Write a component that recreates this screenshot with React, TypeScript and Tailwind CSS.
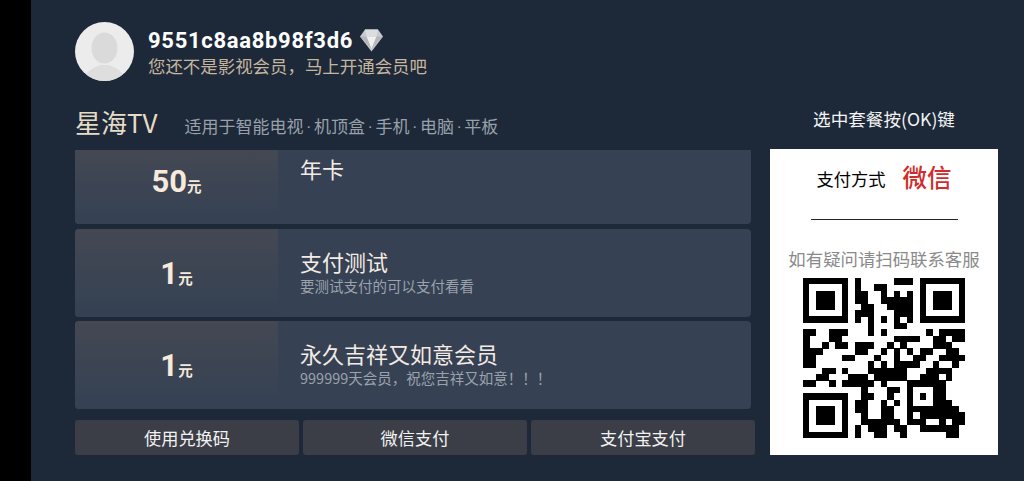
import React from 'react';

const cjk = 'font-["Noto_Sans_CJK_SC",sans-serif]';

// dark modules per row, finder and alignment rings are added below
const qrRows: number[][] = [
  [8, 14, 15, 16],
  [8, 11, 12],
  [8, 9, 12, 14, 16],
  [8, 9, 12, 13, 14, 15, 16],
  [9, 10, 13, 14, 15, 16],
  [8, 9, 10, 14, 15, 16],
  [8, 10, 12, 14, 16],
  [10, 14, 15],
  [0, 1, 4, 5, 6, 10, 12, 19, 21, 22, 23, 24],
  [0, 4, 5, 14, 15, 16, 17, 20, 21, 23, 24],
  [0, 3, 5, 6, 8, 9, 10, 13, 15, 20, 21, 22],
  [0, 1, 2, 8, 9, 12, 14, 16, 18, 19, 22, 23],
  [0, 1, 6, 7, 11, 14, 17, 18, 21, 22, 23, 24],
  [0, 1, 10, 12, 14, 15, 16, 17, 20, 23],
  [3, 4, 6, 10, 11, 12, 13, 14, 15, 19, 20, 21, 22],
  [2, 3, 7, 8, 9, 11, 12, 13, 14, 15, 18, 19, 20, 22],
  [0, 1, 4, 6, 7, 8, 9, 10, 12, 21],
  [9, 13, 14, 21],
  [9, 10, 13, 21],
  [8, 9, 12, 14, 21, 22],
  [8, 9, 12, 13, 21, 22, 23],
  [9, 12, 13, 16, 18, 19, 20, 21, 22, 23, 24],
  [9, 10, 11, 12, 13, 14, 16, 17, 18, 21, 23, 24],
  [8, 10, 11, 12, 14, 15, 18, 19, 20, 21, 22, 23],
  [8, 11, 12, 15, 22, 23],
];

function Finder({ x, y }: { x: number; y: number }) {
  return (
    <g>
      <path fillRule="evenodd" d={`M${x} ${y}h7v7h-7zM${x + 1} ${y + 1}v5h5v-5z`} fill="#000" />
      <rect x={x + 2} y={y + 2} width="3" height="3" fill="#000" />
    </g>
  );
}

function QrCode() {
  return (
    <svg
      width="162"
      height="160"
      viewBox="0 0 25 25"
      preserveAspectRatio="none"
      shapeRendering="crispEdges"
      className="block"
    >
      <Finder x={0} y={0} />
      <Finder x={18} y={0} />
      <Finder x={0} y={18} />
      <path fillRule="evenodd" d="M16 16h5v5h-5zM17 17v3h3v-3z" fill="#000" />
      <rect x="18" y="18" width="1" height="1" fill="#000" />
      {qrRows.map((cols, r) =>
        cols.map((c) => <rect key={`${r}-${c}`} x={c} y={r} width="1.02" height="1.02" fill="#000" />)
      )}
    </svg>
  );
}

function Diamond() {
  return (
    <svg width="23" height="23" viewBox="0 0 23 23">
      <path d="M5 0.5h13l5 7L11.5 22.5 0 7.5z" fill="#c9cacd" />
      <path d="M6.5 7.5h10L11.5 20z" fill="#f0f0f1" />
      <path d="M5 0.5h13l-1.5 7h-10z" fill="#dcdde0" />
      <path d="M0 7.5l6.5 0 5 12.5zM23 7.5h-6.5l-5 12.5z" fill="#b5b7bb" />
    </svg>
  );
}

function Avatar() {
  return (
    <div className="w-[59px] h-[59px] rounded-full bg-[#ececec] overflow-hidden shrink-0">
      <svg width="59" height="59" viewBox="0 0 59 59">
        <ellipse cx="29.5" cy="26" rx="13" ry="15.5" fill="#dadada" />
        <path d="M9 59c1-10 9-13 16-16h9c7 3 15 6 16 16z" fill="#dedede" />
      </svg>
    </div>
  );
}

function Dot() {
  return <span className="font-['Roboto',sans-serif] px-[3px]">·</span>;
}

interface PlanProps {
  price: string;
  title: string;
  desc?: string;
  clipped?: boolean;
}

function Plan({ price, title, desc, clipped }: PlanProps) {
  return (
    <div
      className={`flex w-[676px] bg-[#364153] rounded-[4px] overflow-hidden ${
        clipped ? 'h-[74px] rounded-t-none mb-[1px]' : 'h-[88px]'
      }`}
    >
      <div className="w-[203px] flex items-center justify-center bg-gradient-to-b from-[#444853] to-[#344153] text-[#f7e9dc]">
        <span className={`${clipped ? 'mb-[12px]' : ''} flex items-baseline`}>
          <span className="font-['Roboto',sans-serif] font-bold text-[31px] leading-none">{price}</span>
          <span className="text-[14.5px] font-bold leading-none">元</span>
        </span>
      </div>
      <div className={`flex flex-col pl-[22px] ${clipped ? 'pt-[3px]' : 'justify-center'}`}>
        <div className="text-[22px] leading-[30px] text-[#f3ebe4]">{title}</div>
        {desc && <div className="text-[14.5px] leading-[18px] text-[#9aa2ad] mt-[1px] mb-[6px]">{desc}</div>}
      </div>
    </div>
  );
}

function PayButton({ label }: { label: string }) {
  return (
    <div className="w-[224px] h-[35px] rounded-[3px] bg-[#3b3e46] flex items-center justify-center text-[17.2px] text-[#f2f2f2]">
      {label}
    </div>
  );
}

export default function App() {
  return (
    <div className={`flex w-[1024px] h-[481px] overflow-hidden bg-black ${cjk}`}>
      <div className="w-[31px] shrink-0" />
      <div className="flex-1 bg-[#1d2939] pl-[44px] pt-[22px]">
        <div className="flex items-center gap-[14px] h-[59px]">
          <Avatar />
          <div className="flex flex-col">
            <div className="flex items-center gap-[7px] h-[28px] pt-[2px]">
              <span className="font-['Roboto',sans-serif] font-bold text-[22px] tracking-[0.7px] text-white">
                9551c8aa8b98f3d6
              </span>
              <Diamond />
            </div>
            <div className="text-[17.45px] leading-[24px] text-[#c6b69f]">您还不是影视会员，马上开通会员吧</div>
          </div>
        </div>
        <div className="flex mt-[22px] gap-[15px]">
          <div className="w-[680px] shrink-0">
            <div className="flex items-start h-[47px] pt-[2px]">
              <span className="text-[26px] leading-[34px] text-[#e6dcc6]">星海TV</span>
              <span className="ml-[27px] mt-[8px] text-[17px] leading-[26px] text-[#98a0aa]">
                适用于智能电视<Dot />机顶盒<Dot />手机<Dot />电脑<Dot />平板
              </span>
            </div>
            <div className="flex flex-col gap-[4px]">
              <Plan clipped price="50" title="年卡" />
              <Plan price="1" title="支付测试" desc="要测试支付的可以支付看看" />
              <Plan price="1" title="永久吉祥又如意会员" desc="999999天会员，祝您吉祥又如意！！！" />
            </div>
            <div className="flex gap-[4px] mt-[11px]">
              <PayButton label="使用兑换码" />
              <PayButton label="微信支付" />
              <PayButton label="支付宝支付" />
            </div>
          </div>
          <div className="w-[228px] shrink-0">
            <div className="h-[46px] pt-[3px] text-center text-[17.6px] leading-[26px] text-[#f3f3f3]">
              选中套餐按(OK)键
            </div>
            <div className="h-[306px] bg-white flex flex-col items-center">
              <div className="flex items-center h-[56px] gap-[17px] pt-[2px]">
                <span className="text-[17.3px] text-black mt-[2px]">支付方式</span>
                <span className="text-[24.5px] font-medium text-[#d02c2c] -mt-[1px]">微信</span>
              </div>
              <div className="w-[147px] h-px bg-[#222] mt-[14px]" />
              <div className="mt-[27px] text-[17.4px] leading-[24px] text-[#8a8a8a] whitespace-nowrap">
                如有疑问请扫码联系客服
              </div>
              <div className="mt-[7px]">
                <QrCode />
              </div>
            </div>
          </div>
        </div>
      </div>
    </div>
  );
}
